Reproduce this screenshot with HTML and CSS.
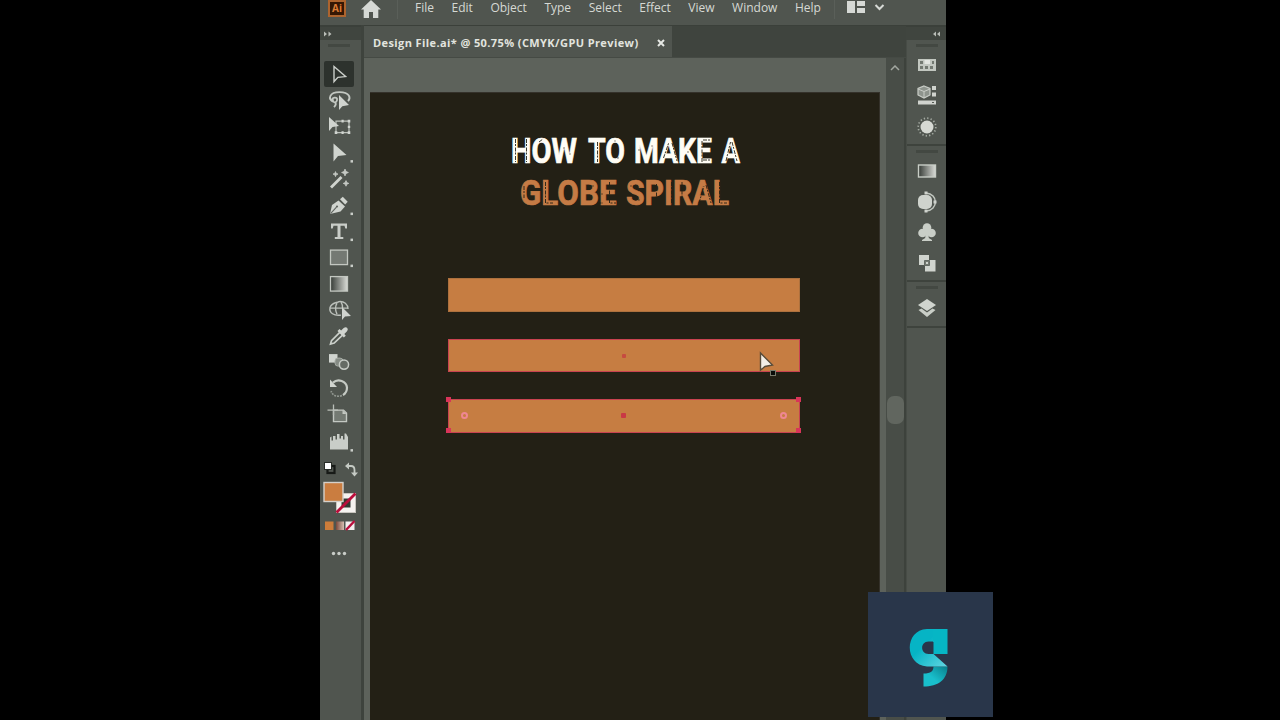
FILE: index.html
```html
<!DOCTYPE html>
<html lang="en">
<head>
<meta charset="utf-8">
<title>Design File.ai</title>
<link rel="stylesheet" href="styles.css">
</head>
<body>
<div class="app">
  <header class="menubar">
    <div class="ai">Ai</div>
    <svg class="home" width="20" height="18" viewBox="0 0 20 18"><path d="M10 0 20 9.5H17.3V18H12V12H8V18H2.7V9.5H0Z" fill="#d6d9d5"/></svg>
    <i class="sep"></i>
    <nav class="menu"><span>File</span><span>Edit</span><span>Object</span><span>Type</span><span>Select</span><span>Effect</span><span>View</span><span>Window</span><span>Help</span></nav>
    <i class="sep sep-end"></i>
    <svg class="workspace" width="38" height="14" viewBox="0 0 38 14"><path d="M0 1H8V13H0ZM10 1H18V6H10ZM10 8H18V13H10Z" fill="#d6d9d5"/><path d="m28.500 5 4 4 4-4" fill="none" stroke="#d6d9d5" stroke-width="2"/></svg>
  </header>
  <div class="workarea">
    <aside class="tools">
      <div class="strip"><svg width="10" height="6" viewBox="0 0 10 6"><path d="M1 .5 4 3 1 5.5ZM5.500.5 8.500 3 5.500 5.500Z" fill="#b9bdb7"/></svg></div>
      <div class="grip"></div>
      <div class="toolset">
        <svg class="active" viewBox="0 0 30 26"><path d="M10 5.500V20.500L13.900 16.300 21.600 15.500Z" fill="none" stroke="#cbcfca" stroke-width="1.400"/></svg>
        <svg viewBox="0 0 30 26"><g fill="none" stroke="#c3c8c2" stroke-width="1.800"><path d="M9 14.500C4 12 5 5 15.500 5S27 11 24 14"/><path d="M8 14C7 10 14 9 13 13S8 15 9 12M11 15Q13 17 10 20"/></g><path d="M15 8V23L18.300 19.200 25 18Z" fill="#d0d4cf"/></svg>
        <svg viewBox="0 0 30 26"><path d="M12 8H25V19.500H12Z" fill="none" stroke="#bdc2bc" stroke-width="1.200"/><g fill="#d0d4cf"><path d="M5 4V18L8.500 14 15 13ZM10.700 18.200h2.600v2.600h-2.600ZM23.700 18.200h2.600v2.600h-2.600ZM23.700 6.700h2.600v2.600h-2.600ZM17.500 6.700h2.200v2.600H17.500ZM17.500 18.200h2.200v2.600H17.500ZM23.800 12.600h2.400v2.400h-2.400Z"/></g></svg>
        <svg viewBox="0 0 30 26"><path d="M9.500 3.500V21.500L14 16 22.500 15Z" fill="#d0d4cf"/><path class="more" d="M26.500 20h2.500v2.500h-2.500Z"/></svg>
        <svg viewBox="0 0 30 26"><path d="M7 21.500 17.500 11" stroke="#d0d4cf" stroke-width="2.900"/><path d="M21 3l1 2.400 2.400 1-2.400 1-1 2.400-1-2.400-2.400-1 2.400-1ZM11.500 5.500l.7 1.800 1.800.7-1.800.7-.7 1.800-.7-1.800-1.800-.7 1.800-.7ZM22 14.500l.8 2 2 .8-2 .8-.8 2-.8-2-2-.8 2-.8Z" fill="#c5c9c4" stroke="#c5c9c4" stroke-width=".8"/></svg>
        <svg viewBox="0 0 30 26"><path d="M6 22 8 13 14.500 8.500 21 14.500 16.500 19.500Z" fill="#d0d4cf"/><path d="m16 7.200 2.800-2.500 4.900 5-2.500 2.700Z" fill="#d0d4cf"/><path d="m6.500 21.500 6-6.500" stroke="#606560" stroke-width="1.100"/><circle cx="13" cy="14.400" r="1.100" fill="#606560"/><path class="more" d="M26.500 20.500h2.500v2.500h-2.500Z"/></svg>
        <svg viewBox="0 0 30 26"><path d="M7 5.500H23V10.500H21.300L20.500 7.700H16.500V19H19.300V21H10.800V19H13.500V7.700H9.500L8.700 10.500H7Z" fill="#c9cdc8"/><path class="more" d="M26.500 20.500h2.500v2.500h-2.500Z"/></svg>
        <svg viewBox="0 0 30 26"><rect x="6.500" y="6" width="17" height="14.500" fill="#747973" stroke="#c3c7c1" stroke-width="1.300"/><path class="more" d="M26.500 20.500h2.500v2.500h-2.500Z"/></svg>
        <svg viewBox="0 0 30 26"><defs><linearGradient id="g"><stop stop-color="#353a35"/><stop offset="1" stop-color="#dadcd7"/></linearGradient></defs><rect x="6.500" y="5.500" width="17" height="14.500" fill="url(#g)" stroke="#c3c7c1" stroke-width="1.300"/></svg>
        <svg viewBox="0 0 30 26"><g fill="none" stroke="#bcc1bb" stroke-width="1.400"><path d="M17 18C10 19 5 16 6 10.500 8 5 13 6 15 4.500 20 4 24 7 24 12"/><path d="M6 11H24M13 6Q10 11 13 17M17 5Q19 8 18.500 11"/></g><path d="M18 10V23L21 19.500 27 19Z" fill="#d0d4cf"/></svg>
        <svg viewBox="0 0 30 26"><path d="M15.800 9.200 7.500 17.500 6.500 21 10.200 20 18.500 12" fill="none" stroke="#cbd0ca" stroke-width="1.700"/><path d="m13.500 8 2-2 1.600 1.500L19.700 4.800Q22 3.500 23.300 5T22.800 8.500L20.300 11l1.500 1.700-2 1.800Z" fill="#d0d4cf"/></svg>
        <svg viewBox="0 0 30 26"><path d="M5 5H13.500V13.500H5Z" fill="#d0d4cf"/><rect x="11" y="9" width="8" height="8" rx="3" fill="#858b84" stroke="#a6aca5"/><circle cx="20" cy="15.500" r="4.600" fill="#656b64" stroke="#c5cac4" stroke-width="1.500"/></svg>
        <svg viewBox="0 0 30 26"><path d="M9 7.500C14 3 22.500 6 23 12.500 23 16 21.500 18.500 19 20" fill="none" stroke="#c5cac4" stroke-width="2.200"/><path d="M18 20.500Q10 23 7 16" fill="none" stroke="#919790" stroke-width="1.700" stroke-dasharray="2 1"/><path d="M6 4.500V12H13Z" fill="#d0d4cf"/></svg>
        <svg viewBox="0 0 30 26"><path d="M9.500 9H19.500L22.500 12V20.500H9.500Z" fill="#747a73" stroke="#c3c8c2" stroke-width="1.400"/><path d="M3.500 9H14M9.500 3.500V14" stroke="#b9beb8" stroke-width="1.300"/><path d="M18.500 9V13H22.500Z" fill="#c3c8c2"/></svg>
        <svg viewBox="0 0 30 26"><path d="M6 21.500V9.500L7.500 8.500V12.500H9V8H11.500V11.500H13V6H15.500V10.500H17V8H19V11.500H20.500V5.500H22L24 9V21.500Z" fill="#c9cdc8"/><path class="more" d="M26.500 21h2.500v2.500h-2.500Z"/></svg>
      </div>
      <svg class="swatches" width="38" height="108" viewBox="0 0 38 108">
        <rect x="5.500" y="7" width="7" height="7" fill="none" stroke="#171a17" stroke-width="2.200"/><rect x="2.500" y="3.500" width="7" height="7" fill="#fff" stroke="#282c27"/>
        <path d="M25 7H29Q32.500 7 32.500 11V14" fill="none" stroke="#c5cac4" stroke-width="1.800"/><path d="m23 7 4-3.500v7ZM32.500 17.500l-3.500-4h7Z" fill="#c5cac4"/>
        <rect x="14.500" y="34.500" width="19" height="19" fill="#f5f3f0" stroke="#c8c5bf"/><rect x="19.500" y="39.500" width="9" height="9" fill="#343833"/><path d="m14.500 53.500 19-19" stroke="#ba0d3b" stroke-width="2.800"/>
        <rect x="2" y="23.500" width="19" height="19" fill="#ca7d40" stroke="#d5d0ca" stroke-width="1.400"/>
        <rect x="3" y="62.500" width="8.500" height="8.500" fill="#cd7d3a"/><rect x="14" y="62.500" width="8" height="8.500" fill="url(#sw)"/><defs><linearGradient id="sw"><stop stop-color="#7b493b"/><stop offset="1" stop-color="#d6beb2"/></linearGradient></defs><rect x="23.500" y="62.500" width="9" height="8.500" fill="#f2eeee"/><path d="m24 71 8.500-9" stroke="#b90e3c" stroke-width="2.400"/>
        <g fill="#c9cdc8"><circle cx="11.500" cy="94.500" r="1.700"/><circle cx="17" cy="94.500" r="1.700"/><circle cx="22.500" cy="94.500" r="1.700"/></g>
      </svg>
    </aside>
    <main class="document">
      <div class="tabs"><div class="tab"><span class="filename">Design File.ai* @ 50.75% (CMYK/GPU Preview)</span><svg width="8" height="8" viewBox="0 0 8 8"><path d="m1 1 6 6M7 1 1 7" stroke="#e6e8e4" stroke-width="2"/></svg></div></div>
      <div class="viewport">
        <section class="artboard">
          <svg class="headline" width="240" height="100" viewBox="0 -10 240 100">
            <g class="title white"><text x="4" y="28.500" textLength="66" lengthAdjust="spacingAndGlyphs">HOW</text><text x="81" y="28.500" textLength="37" lengthAdjust="spacingAndGlyphs">TO</text><text x="127" y="28.500" textLength="78" lengthAdjust="spacingAndGlyphs">MAKE</text><text x="214.500" y="28.500" textLength="18.500" lengthAdjust="spacingAndGlyphs">A</text></g>
            <g class="title orange"><text x="13" y="71" textLength="96.500" lengthAdjust="spacingAndGlyphs">GLOBE</text><text x="119" y="71" textLength="103" lengthAdjust="spacingAndGlyphs">SPIRAL</text></g>
            <g fill="none" stroke="#232015" stroke-width=".9" stroke-dasharray="4 1 2 1.500">
              <path d="M8.500 5V28M19.500 5V28M90.500 8V28M156.500 24 162 8M165 9 170 27M195 7V28M196 26H203M196 6H203M219 27 223.500 8M225 8 230 27M32 8 36 5"/>
              <path d="M38.500 48V69H46M90.500 69H96M102.500 48V69H109M149.500 50V70M164.500 48V70M175 48V70M192 69 197 52M199 51 204 69M212.500 48V69H220M17 52V64"/>
            </g>
            <g fill="#232015" opacity=".65"><circle cx="57" cy="14" r=".8"/><circle cx="63" cy="20" r=".7"/><circle cx="111" cy="24" r=".8"/><circle cx="108" cy="7" r=".7"/><circle cx="132" cy="16" r=".8"/><circle cx="145" cy="12" r=".7"/><circle cx="181" cy="18" r=".8"/><circle cx="86" cy="52" r=".8"/><circle cx="95" cy="60" r=".8"/><circle cx="124" cy="52" r=".8"/><circle cx="132" cy="66" r=".8"/></g>
          </svg>
          <div class="bars">
            <div class="bar"></div>
            <div class="bar hovered"><i class="center"></i>
              <svg class="cursor" width="20" height="28" viewBox="0 0 20 28"><path d="M2.500 2V19L7 15.500 14.500 14Z" fill="#f3eee6" stroke="#594c39" stroke-width="1.400"/><rect x="12.500" y="19.500" width="5" height="5" fill="#080b08" stroke="#77796b" stroke-width="1"/></svg>
            </div>
            <div class="bar selected"><i class="center"></i><i class="h tl"></i><i class="h tr"></i><i class="h bl"></i><i class="h br"></i><i class="radius left"></i><i class="radius right"></i></div>
          </div>
        </section>
        <div class="scrollbar"><svg width="10" height="6" viewBox="0 0 10 6"><path d="m1 5 4-4 4 4" fill="none" stroke="#a2a7a0" stroke-width="1.500"/></svg><div class="thumb"></div></div>
      </div>
    </main>
    <aside class="panels">
      <div class="strip"><svg width="9" height="6" viewBox="0 0 9 6"><path d="M4 .5 1 3 4 5.500ZM8 .5 5 3 8 5.500Z" fill="#b9bdb7"/></svg></div>
      <div class="group first"><div class="grip"></div>
        <svg width="20" height="14" viewBox="0 0 20 14"><path d="M1 1H19V13H1Z" fill="#c2c7c0"/><path d="M3 3H6V6H3ZM3 8H6V11H3ZM8 8H11V11H8ZM13 8H16V11H13ZM15 3H17V6H15Z" fill="#737971"/><path d="M7.500 2H13V6H7.500Z" fill="#e2e5e0"/></svg>
        <svg width="20" height="20" viewBox="0 0 20 20"><path d="M7 1 13 3.500V10L7 13 1 10V3.500Z" fill="#8e948d" stroke="#c9cdc7" stroke-width="1.200"/><path d="M1 4 7 6.500 13 4M7 6.500V13" fill="none" stroke="#c9cdc7"/><path d="M15 1H19V5H15ZM15 7.500H19V11.500H15ZM1 15.500H19V19.500H1Z" fill="#d0d3ce"/><path d="M15 17h2v1h-2Z" fill="#555b54"/></svg>
        <svg width="22" height="22" viewBox="0 0 22 22"><circle cx="11" cy="11" r="6.500" fill="#d6d9d3"/><circle cx="11" cy="11" r="8.800" fill="none" stroke="#a5aba3" stroke-width="1.700" stroke-dasharray="1.300 2.150"/></svg>
      </div>
      <div class="group second"><div class="grip"></div>
        <svg width="20" height="14" viewBox="0 0 20 14"><rect x="1.500" y="1" width="17" height="12" fill="url(#g)" stroke="#c8cdc6" stroke-width="1.400"/></svg>
        <svg width="20" height="22" viewBox="0 0 20 22"><rect x="1" y="4" width="14" height="14" rx="5" fill="#cfd3cd"/><path d="M9 2C21.500 3 21.500 19 9 20" fill="none" stroke="#c1c6bf" stroke-width="1.500"/><path d="M7.500 .5h3v3h-3ZM7.500 18.500h3v3h-3ZM16.500 9.500h3v3h-3Z" fill="#cfd3cd"/></svg>
        <svg width="20" height="20" viewBox="0 0 20 20"><g fill="#c9cec7"><circle cx="10" cy="5.500" r="4.300"/><circle cx="5.500" cy="11" r="4.300"/><circle cx="14.500" cy="11" r="4.300"/><path d="M9 7h2l.8 9 3.200 2v1H5v-1l3.200-2Z"/></g></svg>
        <svg width="18" height="18" viewBox="0 0 18 18"><path d="M1 1H11V6H17.500V17.500H7V11H1Z" fill="#d0d4ce"/><path d="M6.500 6.500H11.500V11.500H6.500Z" fill="#737971" stroke="#656b64"/><path d="M8 8h2v2H8Z" fill="#d0d4ce"/></svg>
      </div>
      <div class="group third"><div class="grip"></div>
        <svg width="20" height="20" viewBox="0 0 20 20"><path d="m10 1 9 6-9 6-9-6Z" fill="#d0d4ce"/><path d="m1.500 12 3-1.500 5.500 4 5.500-4 3 1.500L10 19Z" fill="#c9cec7"/></svg>
      </div>
    </aside>
  </div>
</div>
<div class="badge"><svg width="40" height="60" viewBox="0 0 40 60"><defs><linearGradient id="a" x1="0" y1="0" x2="1" y2="1"><stop offset=".4" stop-color="#06b4c5"/><stop offset="1" stop-color="#62d6e2"/></linearGradient><linearGradient id="b" x1="1" y1="0" x2="0" y2="1"><stop stop-color="#087f8b"/><stop offset=".6" stop-color="#19bfcc"/></linearGradient></defs><path d="M38.500 38.500C38.500 52 29 58.500 14.500 58.500V45.500C22 45.500 24.500 43 24.500 38.500Z" fill="url(#b)"/><path d="M24.500 1V13.500H19.500C11 13.500 11 26 19.500 26H24.500L38.500 38.500H18C-5 37-5 2 18 1Z" fill="url(#a)"/><path d="M24 1H38.500V26H24.500V14H24Z" fill="#06b6c5"/></svg></div>
</body>
</html>
```
FILE: styles.css
```css
* { box-sizing: border-box; }
body { margin: 0; background: #000; height: 720px; overflow: hidden; position: relative; font-family: "Open Sans", "Noto Sans", sans-serif; }
svg { display: block; flex: none; }
.app { width: 626px; height: 720px; margin-left: 320px; background: #50554f; display: flex; flex-direction: column; }
.menubar { height: 25px; flex: none; display: flex; align-items: flex-start; background: #50554f; }
.ai { width: 18px; height: 17px; margin-left: 8px; background: #351704; border: 2px solid #ad642e; color: #dc7c35; font: 700 10px/13px "Open Sans", sans-serif; text-align: center; }
.home { margin-left: 15px; }
.sep { width: 1px; height: 19px; margin-left: 16px; background: #5a5f59; }
.menu { display: flex; justify-content: space-between; width: 406px; margin-left: 17px; font-size: 12px; line-height: 16px; color: #d6d9d4; }
.sep-end { margin-left: 13px; }
.workspace { margin: 0 0 0 12px; }
.workarea { flex: 1; min-height: 0; display: grid; grid-template-columns: 44px 542px 40px; }
.strip { height: 15px; background: #40453f; border-top: 2px solid #3b403a; display: flex; align-items: center; }
.grip { width: 22px; height: 3px; background: #434842; }
.tools { background: #50554f; border-right: 3px solid #3e433d; overflow: hidden; }
.tools .strip { padding-left: 3px; }
.tools .grip { margin: 4px 0 0 8px; }
.toolset { margin: 14px 0 0 4px; display: flex; flex-direction: column; }
.toolset svg { width: 30px; height: 26.2px; }
.toolset .active { background: #2d322d; border-radius: 2px; }
.more { fill: #c9cdc8; }
.swatches { margin: 5px 0 0 2px; }
.document { display: flex; flex-direction: column; min-width: 0; }
.tabs { height: 33px; background: #3f443e; border-top: 1px solid #3b403a; border-bottom: 1px solid #454a44; }
.tab { height: 31px; width: 308px; background: #50554f; padding: 2px 0 0 9px; display: flex; align-items: center; gap: 19px; }
.filename { width: 265px; font-size: 11px; letter-spacing: 0.4px; font-weight: 700; white-space: nowrap; color: #e2e4df; }
.viewport { flex: 1; display: flex; background: #5d625b; padding-left: 6px; }
.artboard { width: 510px; margin-top: 34px; padding-top: 31px; background: #232015; border: solid #34312a; border-width: 1px 1px 0 0; }
.headline { margin-left: 137px; }
.title { font: 700 34.5px Roboto, sans-serif; stroke-width: 0.7px; }
.white { fill: #fffdf5; stroke: #fffdf5; }
.orange { fill: #c57b45; stroke: #c57b45; }
.bars { margin: 54px 0 0 78px; width: 352px; display: grid; gap: 27px; }
.bar { height: 33.5px; background: #c67d42; border: 1px solid #ad713e; position: relative; }
.hovered, .selected { border-color: #c84350; }
.center { position: absolute; width: 4px; height: 4px; left: 173px; top: 14px; background: #c64b40; border-radius: 1px; }
.selected .center { width: 5px; height: 5px; background: #c93945; top: 12.5px; left: 172px; }
.h { position: absolute; width: 5px; height: 5px; background: #d83459; }
.tl { left: -3px; top: -3px; }
.tr { right: -2px; top: -3px; }
.bl { left: -3px; bottom: -1px; }
.br { right: -2px; bottom: -1px; }
.radius { position: absolute; top: 12px; width: 7px; height: 7px; border: 2px solid #ef8792; border-radius: 50%; }
.left { left: 12px; }
.right { right: 12px; }
.cursor { position: absolute; left: 309px; top: 11px; }
.scrollbar { width: 18px; margin-left: 6px; background: #484d47; display: flex; flex-direction: column; align-items: center; padding-top: 7px; }
.scrollbar .thumb { width: 17px; height: 28px; margin-top: 325px; background: #61665f; border-radius: 7px; }
.viewport::after { content: ""; width: 2px; background: #3d423c; }
.panels { background: #50554f; border-left: 1px solid #474c46; }
.panels .strip { justify-content: flex-end; padding-right: 5px; margin-left: -1px; }
.group { display: flex; flex-direction: column; align-items: center; border-bottom: 2px solid #3e433d; }
.group .grip { margin: 4px 0 0; }
.first { height: 106px; }
.first svg:nth-child(2) { margin-top: 11px; }
.first svg:nth-child(3) { margin-top: 13px; }
.first svg:nth-child(4) { margin-top: 11px; }
.second { height: 136px; }
.second svg:nth-child(2) { margin-top: 11px; }
.second svg:nth-child(3) { margin-top: 13px; }
.second svg:nth-child(4) { margin-top: 9px; }
.second svg:nth-child(5) { margin-top: 12px; }
.third { height: 46px; }
.third svg { margin-top: 9px; }
.badge { position: absolute; left: 868px; top: 592px; width: 125px; height: 125px; background: #29364a; display: grid; place-items: center; padding: 6px 3px 0 0; }
```
